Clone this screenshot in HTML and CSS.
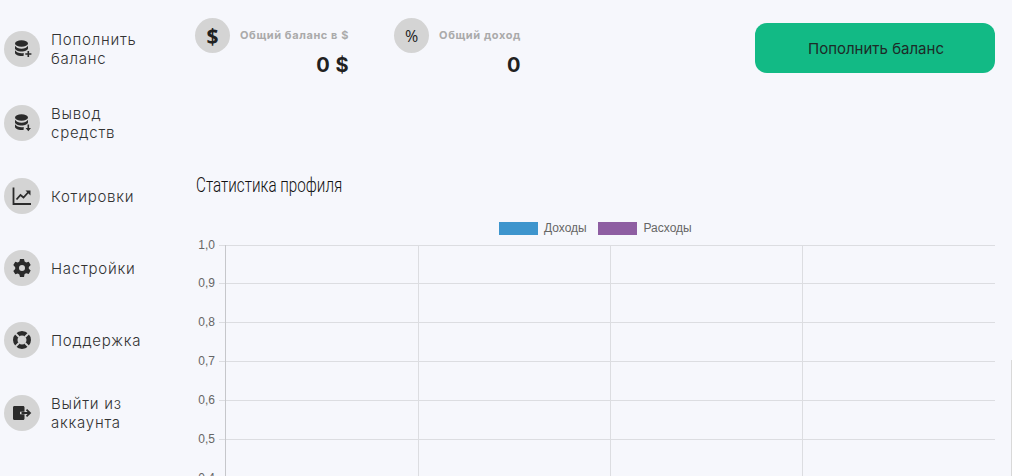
FILE: index.html
```html
<!DOCTYPE html>
<html lang="ru">
<head>
<meta charset="utf-8">
<title>Статистика профиля</title>
<link rel="stylesheet" href="styles.css">
</head>
<body>
<nav class="nav">
  <a class="nav-item">
    <span class="nav-icon"><svg viewBox="-1 0 20 20" width="20" height="20"><ellipse cx="8.500" cy="4.500" rx="6.500" ry="3.200" class="f"/><path class="f" d="M2 6.800c1.200 2 3.800 2.900 6.500 2.900s5.300-.9 6.500-2.900v2.400c0 1.800-2.900 3.200-6.500 3.200S2 11 2 9.200zM2 11.300c1.200 2 3.800 2.900 6.500 2.900.8 0 1.500-.1 2.200-.2v2.700c-.7.100-1.400.2-2.200.2-3.600 0-6.500-1.400-6.500-3.200z"/><path class="f" d="M14.500 12h1.600v2.300h2.300v1.500h-2.300v2.300h-1.600v-2.300h-2.200v-1.500h2.200z"/></svg></span>
    <span>Пополнить<br>баланс</span>
  </a>
  <a class="nav-item">
    <span class="nav-icon"><svg viewBox="-1 0 20 20" width="20" height="20"><ellipse cx="8.500" cy="4.500" rx="6.500" ry="3.200" class="f"/><path class="f" d="M2 6.800c1.200 2 3.800 2.900 6.500 2.900s5.300-.9 6.500-2.900v2.400c0 1.800-2.900 3.200-6.500 3.200S2 11 2 9.200zM2 11.300c1.200 2 3.800 2.900 6.500 2.900.8 0 1.500-.1 2.200-.2v2.700c-.7.100-1.400.2-2.200.2-3.600 0-6.500-1.400-6.500-3.200z"/><path class="f" d="M14.500 11.500h1.600v3.600h1.900l-2.700 3.100-2.700-3.100h1.900z"/></svg></span>
    <span>Вывод<br>средств</span>
  </a>
  <a class="nav-item">
    <span class="nav-icon"><svg viewBox="0 0 20 20" width="20" height="20"><path class="s" d="M1.500 1.500v16.500h17.500"/><path class="s" d="M4.500 13.500l4-4.500 3 2.500 5-5.500"/><path class="f" d="M13.500 4.500h5v5z"/></svg></span>
    <span>Котировки</span>
  </a>
  <a class="nav-item">
    <span class="nav-icon"><svg viewBox="0 0 20 20" width="20" height="20"><path class="f" fill-rule="evenodd" d="M8 1h4l.6 2.600 1.600.9 2.500-.8 2 3.400-1.900 1.800v1.900l1.900 1.800-2 3.400-2.500-.8-1.600.9L12 19H8l-.6-2.600-1.600-.9-2.500.8-2-3.400 1.900-1.800V9.200L1.300 7.100l2-3.400 2.500.8 1.600-.9zM10 7a3 3 0 1 0 0 6 3 3 0 0 0 0-6z"/></svg></span>
    <span>Настройки</span>
  </a>
  <a class="nav-item">
    <span class="nav-icon"><svg viewBox="0 0 20 20" width="20" height="20"><path class="f" fill-rule="evenodd" d="M10 1a9 9 0 1 0 0 18 9 9 0 0 0 0-18zm0 4.500a4.500 4.500 0 1 1 0 9 4.500 4.500 0 0 1 0-9z"/><path class="g" d="M3 3l4 4M17 3l-4 4M3 17l4-4M17 17l-4-4"/></svg></span>
    <span>Поддержка</span>
  </a>
  <a class="nav-item">
    <span class="nav-icon"><svg viewBox="0 0 20 20" width="20" height="20"><path class="f" d="M2.500 3h8.500c1 0 1.500.6 1.500 1.500V8.800H8v2.400h4.500v4.300c0 .9-.5 1.500-1.500 1.500H2.500c-1 0-1.500-.6-1.500-1.500v-11C1 3.600 1.500 3 2.500 3z"/><path class="s" d="M9.500 10h8M14.500 6.700l3.500 3.300-3.500 3.300"/></svg></span>
    <span>Выйти из<br>аккаунта</span>
  </a>
</nav>
<main class="main">
  <div class="top">
    <div class="stat">
      <span class="stat-icon stat-dollar">$</span>
      <div class="stat-body">
        <div class="stat-label">Общий баланс в $</div>
        <div class="stat-value">0 $</div>
      </div>
    </div>
    <div class="stat">
      <span class="stat-icon stat-percent">%</span>
      <div class="stat-body">
        <div class="stat-label">Общий доход</div>
        <div class="stat-value">0</div>
      </div>
    </div>
    <button class="btn">Пополнить баланс</button>
  </div>
  <h2 class="title">Статистика профиля</h2>
  <svg class="chart" width="817" height="260" viewBox="0 0 817 260">
    <rect x="314" y="6" width="39" height="13" class="leg-a"/>
    <text x="359" y="16" class="lbl">Доходы</text>
    <rect x="413" y="6" width="39" height="13" class="leg-b"/>
    <text x="458.500" y="16" class="lbl">Расходы</text>
    <g class="grid">
      <path d="M34 29.500H810M34 67.500H810M34 106.500H810M34 145.500H810M34 184.500H810M34 223.500H810"/>
      <path d="M233.500 29V260M425.500 29V260M617.500 29V260"/>
    </g>
    <path class="axis" d="M40.500 29V260"/>
    <g class="ticks">
      <text x="30" y="33">1,0</text>
      <text x="30" y="71">0,9</text>
      <text x="30" y="110">0,8</text>
      <text x="30" y="149">0,7</text>
      <text x="30" y="188">0,6</text>
      <text x="30" y="227">0,5</text>
      <text x="30" y="266">0,4</text>
    </g>
  </svg>
</main>
<div class="scroll-hint"></div>
</body>
</html>
```
FILE: styles.css
```css
* { box-sizing: border-box; }
html, body { height: 476px; overflow: hidden; }
body {
  margin: 0;
  display: flex;
  background: #f6f7fc;
  font-family: Inter, "Noto Sans", sans-serif;
  color: #212121;
}
.nav {
  width: 185px;
  flex: none;
  padding: 30px 0 0 4px;
  display: flex;
  flex-direction: column;
  gap: 36px;
}
.nav-item {
  display: flex;
  align-items: center;
  gap: 11px;
  font-size: 15px;
  font-weight: 300;
  line-height: 19px;
  min-height: 36px;
  color: #333333;
  letter-spacing: .75px;
}
.nav-icon {
  width: 36px;
  height: 36px;
  border-radius: 50%;
  background: #d4d4d4;
  display: flex;
  align-items: center;
  justify-content: center;
  flex: none;
}
.f { fill: #2b2b2b; }
.s { fill: none; stroke: #2b2b2b; stroke-width: 1.8; }
.g { fill: none; stroke: #d4d4d4; stroke-width: 1.8; }
.main {
  flex: 1;
  padding: 18px 17px 0 10px;
  min-width: 0;
}
.top {
  display: flex;
  align-items: flex-start;
  height: 80px;
}
.stat {
  display: flex;
  margin-right: 45px;
}
.stat-icon {
  width: 35px;
  height: 35px;
  border-radius: 50%;
  background: #d4d4d4;
  display: flex;
  align-items: center;
  justify-content: center;
  flex: none;
  margin-right: 10px;
  color: #212121;
  font-family: "Open Sans", sans-serif;
}
.stat-dollar { font-size: 21px; font-weight: 700; }
.stat-percent { font-size: 16px; font-weight: 500; }
.stat-body { text-align: right; }
.stat-label {
  font-size: 11px;
  font-weight: 700;
  line-height: 35px;
  height: 35px;
  letter-spacing: .6px;
  color: #aaaaaa;
}
.stat-value {
  font-size: 20px;
  font-weight: 700;
  line-height: 24px;
  letter-spacing: .5px;
  color: #212121;
}
.btn {
  margin: 5px 0 0 auto;
  width: 240px;
  height: 50px;
  border: none;
  border-radius: 12px;
  background: #12ba85;
  color: #1d2b28;
  font-family: Inter, sans-serif;
  font-size: 15px;
  padding: 0 0 0 2px;
}
.title {
  margin: 75px 0 0 1px;
  font-family: Roboto, sans-serif;
  font-size: 21px;
  font-weight: 300;
  line-height: 24px;
  color: #111111;
  transform: scaleX(.725);
  transform-origin: left center;
  white-space: nowrap;
}
.chart {
  display: block;
  margin: 19px 0 0 -10px;
}
.leg-a { fill: #3e95cd; }
.leg-b { fill: #8e5ea2; }
.lbl, .ticks text {
  font-family: "Liberation Sans", sans-serif;
  font-size: 12px;
  fill: #666666;
}
.ticks text { text-anchor: end; }
.grid path { fill: none; stroke: #dcdde1; stroke-width: 1; }
.axis { fill: none; stroke: #c6c7cb; stroke-width: 1; }
.scroll-hint {
  position: absolute;
  right: 0;
  top: 360px;
  width: 1px;
  height: 116px;
  background: #d9d9d9;
}
```
